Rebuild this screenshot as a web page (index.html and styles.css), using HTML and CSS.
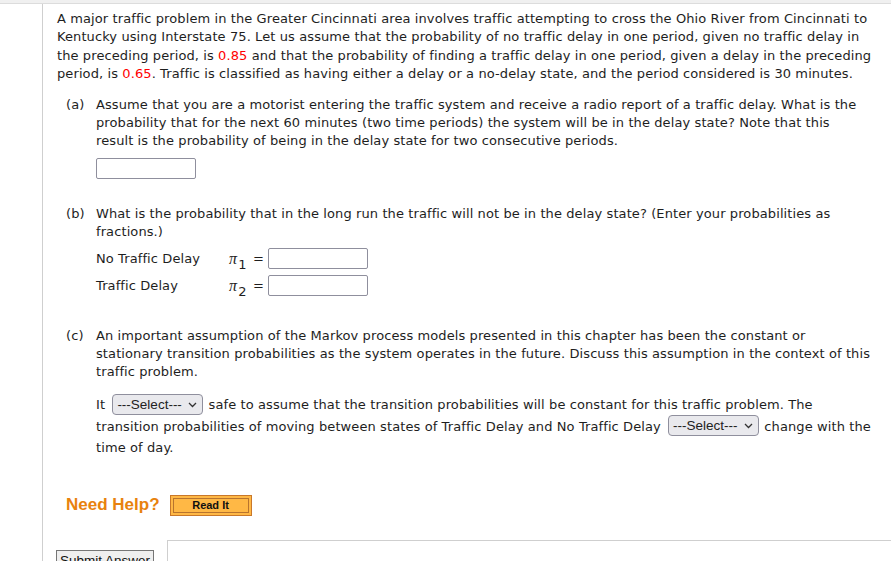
FILE: index.html
```html
<!DOCTYPE html>
<html>
<head>
<meta charset="utf-8">
<link rel="stylesheet" href="styles.css">
</head>
<body>
<div class="topbar"></div>
<div class="main">
  <p class="intro">A major traffic problem in the Greater Cincinnati area involves traffic attempting to cross the Ohio River from Cincinnati to<br>Kentucky using Interstate 75. Let us assume that the probability of no traffic delay in one period, given no traffic delay in<br>the preceding period, is <span class="red">0.85</span> and that the probability of finding a traffic delay in one period, given a delay in the preceding<br>period, is <span class="red">0.65</span>. Traffic is classified as having either a delay or a no-delay state, and the period considered is 30 minutes.</p>

  <div class="part part-a">
    <div class="label">(a)</div>
    <div class="body">
      <p>Assume that you are a motorist entering the traffic system and receive a radio report of a traffic delay. What is the<br>probability that for the next 60 minutes (two time periods) the system will be in the delay state? Note that this<br>result is the probability of being in the delay state for two consecutive periods.</p>
      <input class="answer" type="text">
    </div>
  </div>

  <div class="part part-b">
    <div class="label">(b)</div>
    <div class="body">
      <p>What is the probability that in the long run the traffic will not be in the delay state? (Enter your probabilities as<br>fractions.)</p>
      <div class="rows">
        <div class="row"><span class="rlabel">No Traffic Delay</span><span class="pi">π<sub>1</sub></span><span class="eq">=</span><input class="answer" type="text"></div>
        <div class="row"><span class="rlabel">Traffic Delay</span><span class="pi">π<sub>2</sub></span><span class="eq">=</span><input class="answer" type="text"></div>
      </div>
    </div>
  </div>

  <div class="part part-c">
    <div class="label">(c)</div>
    <div class="body">
      <p>An important assumption of the Markov process models presented in this chapter has been the constant or<br>stationary transition probabilities as the system operates in the future. Discuss this assumption in the context of this<br>traffic problem.</p>
      <p class="fill">It <span class="sel"><select><option>---Select---</option></select><svg class="chev" width="9" height="6" viewBox="0 0 9 6"><path d="M1 1 L4.5 4.5 L8 1" fill="none" stroke="#333" stroke-width="1.3"/></svg></span> safe to assume that the transition probabilities will be constant for this traffic problem. The<br>transition probabilities of moving between states of Traffic Delay and No Traffic Delay <span class="sel"><select><option>---Select---</option></select><svg class="chev" width="9" height="6" viewBox="0 0 9 6"><path d="M1 1 L4.5 4.5 L8 1" fill="none" stroke="#333" stroke-width="1.3"/></svg></span> change with the<br>time of day.</p>
    </div>
  </div>

  <div class="help">
    <span class="need">Need Help?</span>
    <button class="readit"><span>Read It</span></button>
  </div>

  <div class="bottom">
    <button class="submit">Submit Answer</button>
    <div class="frame"></div>
  </div>
</div>
</body>
</html>
```

FILE: styles.css
```css
html, body {
  margin: 0;
  padding: 0;
  background: #fff;
  overflow: hidden;
}
body {
  font-family: "DejaVu Sans", Verdana, sans-serif;
  font-size: 13px;
  color: #1e1e1e;
}
.topbar {
  height: 3px;
  background: #f0f0f0;
  border-bottom: 1px solid #dcdcdc;
}
.main {
  margin-left: 42px;
  border-left: 1px solid #cfcfcf;
  padding: 6px 6px 0 14px;
  height: 600px;
  letter-spacing: 0.1px;
  white-space: nowrap;
}
p {
  margin: 0;
}
.intro {
  line-height: 18.3px;
}
.red {
  color: #f00;
}
.part {
  display: flex;
  line-height: 18px;
}
.part .label {
  width: 30px;
  padding-left: 9px;
  flex: none;
}
.part .body {
  flex: 1;
}
.part-a {
  margin-top: 13px;
}
.answer {
  display: block;
  box-sizing: border-box;
  width: 100px;
  height: 21px;
  margin: 0;
  border: 1px solid #8f8f9d;
  border-radius: 2px;
  padding: 0 4px;
  background: #fff;
}
.part-a .answer {
  margin-top: 8px;
}
.part-b {
  margin-top: 26px;
}
.rows {
  margin-top: 7px;
  display: flex;
  flex-direction: column;
  gap: 6px;
}
.row {
  display: flex;
  align-items: center;
  height: 21px;
}
.rlabel {
  width: 133px;
}
.pi {
  font-family: "Liberation Serif", "DejaVu Serif", serif;
  font-style: italic;
  font-size: 16px;
  width: 24px;
}
.pi sub {
  font-family: "DejaVu Sans", sans-serif;
  font-style: normal;
  font-size: 13px;
  vertical-align: -5px;
  line-height: 0;
  margin-left: 1px;
}
.eq {
  width: 15px;
}
.part-c {
  margin-top: 31px;
}
.fill {
  margin-top: 13px;
  line-height: 21.5px;
}
.sel {
  position: relative;
  display: inline-block;
  vertical-align: middle;
  margin: -3px 1px 0 3px;
}
.sel select {
  appearance: none;
  -webkit-appearance: none;
  box-sizing: border-box;
  width: 91px;
  height: 21px;
  border: 1px solid #8f8f9d;
  border-radius: 4px;
  background: #e9e9ed;
  font-family: "Liberation Sans", Arial, sans-serif;
  font-size: 13.5px;
  letter-spacing: 0;
  color: #222;
  padding: 0 0 0 4px;
  margin: 0;
  display: block;
}
.chev {
  position: absolute;
  right: 6px;
  top: 8px;
  pointer-events: none;
}
.help {
  margin-top: 36px;
  margin-left: 9px;
  display: flex;
  align-items: center;
  gap: 10px;
  letter-spacing: 0;
}
.need {
  font-family: "Liberation Sans", Arial, sans-serif;
  font-weight: bold;
  font-size: 17px;
  color: #e8820e;
}
.readit {
  box-sizing: border-box;
  width: 82px;
  height: 21px;
  padding: 2px;
  margin: 0;
  background: #ffb845;
  border: 1px solid #c9782a;
  display: flex;
}
.readit span {
  flex: 1;
  border: 1px solid #b8742e;
  font-family: "Liberation Sans", Arial, sans-serif;
  font-weight: bold;
  font-size: 11px;
  color: #111;
  line-height: 13px;
}
.bottom {
  margin-top: 24px;
  display: flex;
  align-items: flex-start;
  letter-spacing: 0;
}
.submit {
  margin: 10px 0 0 -1px;
  box-sizing: border-box;
  width: 98px;
  height: 22px;
  padding: 0;
  background: #efefef;
  border: 1px solid #767676;
  font-family: "Liberation Sans", Arial, sans-serif;
  font-size: 13.5px;
  color: #111;
}
.frame {
  margin-left: 13px;
  flex: 1;
  height: 40px;
  border-top: 1px solid #cfcfcf;
  border-left: 1px solid #cfcfcf;
  margin-right: -6px;
}
```
